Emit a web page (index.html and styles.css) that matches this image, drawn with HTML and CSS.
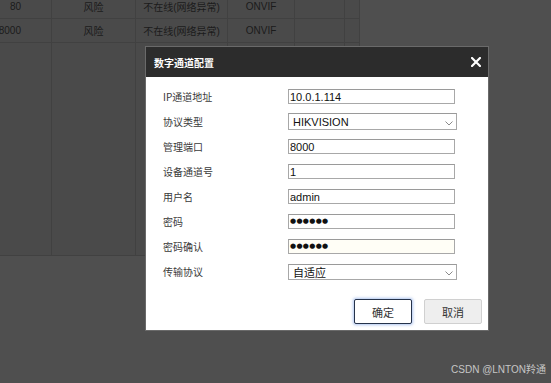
FILE: index.html
```html
<!DOCTYPE html>
<html lang="zh-CN">
<head>
<meta charset="utf-8">
<title>数字通道配置</title>
<link rel="stylesheet" href="styles.css">
</head>
<body>
<div class="page">
  <div class="grid">
    <div class="row">
      <div class="c c1">80</div><div class="c">风险</div><div class="c">不在线(网络异常)</div><div class="c">ONVIF</div><div class="c"></div><div class="c"></div>
    </div>
    <div class="row">
      <div class="c c1">8000</div><div class="c">风险</div><div class="c">不在线(网络异常)</div><div class="c">ONVIF</div><div class="c"></div><div class="c"></div>
    </div>
    <div class="row">
      <div class="c"></div><div class="c"></div><div class="c"></div><div class="c"></div><div class="c"></div><div class="c"></div>
    </div>
  </div>
</div>

<div class="dialog">
  <div class="dlg-head">
    <span class="dlg-title">数字通道配置</span>
    <svg class="dlg-close" width="10" height="10" viewBox="0 0 10 10"><path d="M1 1L9 9M9 1L1 9" stroke="#fff" stroke-width="2.2" stroke-linecap="square"/></svg>
  </div>
  <div class="dlg-body">
    <div class="form">
      <label class="lbl">IP通道地址</label>
      <div class="fld"><input class="inp" type="text" value="10.0.1.114"></div>
      <label class="lbl">协议类型</label>
      <div class="fld"><div class="sel sel-tall"><span>HIKVISION</span><svg class="chev" width="8" height="5" viewBox="0 0 8 5"><path d="M0.5 0.5L4 4L7.5 0.5" fill="none" stroke="#8a8a8a" stroke-width="1"/></svg></div></div>
      <label class="lbl">管理端口</label>
      <div class="fld"><input class="inp" type="text" value="8000"></div>
      <label class="lbl">设备通道号</label>
      <div class="fld"><input class="inp" type="text" value="1"></div>
      <label class="lbl">用户名</label>
      <div class="fld"><input class="inp" type="text" value="admin"></div>
      <label class="lbl">密码</label>
      <div class="fld"><div class="inp pw">●●●●●●</div></div>
      <label class="lbl">密码确认</label>
      <div class="fld"><div class="inp pw pw-auto">●●●●●●</div></div>
      <label class="lbl">传输协议</label>
      <div class="fld"><div class="sel"><span class="cjk">自适应</span><svg class="chev" width="8" height="5" viewBox="0 0 8 5"><path d="M0.5 0.5L4 4L7.5 0.5" fill="none" stroke="#8a8a8a" stroke-width="1"/></svg></div></div>
    </div>
    <div class="footer">
      <button class="btn btn-ok">确定</button>
      <button class="btn btn-cancel">取消</button>
    </div>
  </div>
</div>

<div class="watermark">CSDN @LNTON羚通</div>
</body>
</html>
```

FILE: styles.css
```css
html, body {
  margin: 0;
  padding: 0;
}
body {
  width: 551px;
  height: 383px;
  overflow: hidden;
  background: #4f4f4f;
  font-family: "Liberation Sans", "Noto Sans CJK SC", sans-serif;
  position: relative;
}
.page {
  width: 360px;
  height: 256px;
  overflow: hidden;
  background: #4a4a4a;
}
.grid {
  margin-top: -5px;
  height: 261px;
  display: grid;
  grid-template-rows: 24px 24px 1fr;
}
.row {
  display: grid;
  grid-template-columns: 52px 84px 92px 67px 50px 15px;
}
.c {
  box-sizing: border-box;
  border-right: 1px solid #414141;
  border-bottom: 1px solid #414141;
  display: flex;
  align-items: center;
  justify-content: center;
  font-size: 10px;
  color: #1b1b1b;
  white-space: nowrap;
  overflow: hidden;
}
.c1 {
  justify-content: flex-end;
  padding-right: 30px;
}

.dialog {
  position: absolute;
  left: 145px;
  top: 46px;
  width: 344px;
  height: 285px;
  box-sizing: border-box;
  border: 1px solid #6a6a6a;
  display: flex;
  flex-direction: column;
}
.dlg-head {
  height: 30px;
  background: #2c2c2c;
  display: flex;
  align-items: center;
  justify-content: space-between;
  padding: 0 7px 0 8px;
}
.dlg-title {
  color: #ffffff;
  font-family: "Noto Sans CJK SC", sans-serif;
  font-weight: 700;
  font-size: 10px;
}
.dlg-close {
  display: block;
}
.dlg-body {
  flex: 1;
  background: #ffffff;
  padding: 7px 6px 6px 17px;
  display: flex;
  flex-direction: column;
}
.form {
  display: grid;
  grid-template-columns: 125px 169px;
  grid-auto-rows: 25px;
}
.lbl {
  display: flex;
  align-items: center;
  font-family: "Noto Sans CJK SC", sans-serif;
  font-size: 10px;
  color: #3a3a3a;
}
.fld {
  display: flex;
  align-items: center;
}
.inp {
  box-sizing: border-box;
  width: 167px;
  height: 15px;
  margin: 0;
  padding: 0 0 0 1px;
  border: 1px solid #a8a8a8;
  border-top-color: #9a9a9a;
  font-family: "Liberation Sans", sans-serif;
  font-size: 11px;
  color: #111;
  background: #fff;
  outline: none;
}
.pw {
  display: flex;
  align-items: center;
  font-family: "DejaVu Sans", sans-serif;
  font-size: 7px;
  letter-spacing: 0.3px;
  line-height: 1;
  color: #111;
}
.pw-auto {
  background: #fffef6;
}
.sel {
  position: relative;
  box-sizing: border-box;
  width: 169px;
  height: 16px;
  border: 1px solid #a8a8a8;
  border-top-color: #9a9a9a;
  display: flex;
  align-items: center;
  padding-left: 4px;
  font-size: 11px;
  color: #111;
}
.sel-tall {
  height: 17px;
}
.cjk {
  font-family: "Noto Sans CJK SC", sans-serif;
  font-size: 11px;
}
.chev {
  position: absolute;
  right: 3px;
  top: 50%;
  margin-top: -1px;
}
.footer {
  margin-top: 15px;
  display: flex;
  justify-content: flex-end;
  gap: 12px;
}
.btn {
  box-sizing: border-box;
  width: 58px;
  height: 25px;
  margin: 0;
  padding: 0;
  font-family: "Noto Sans CJK SC", sans-serif;
  font-size: 11px;
  color: #333;
  border-radius: 2px;
}
.btn-ok {
  background: #ffffff;
  border: 1px solid #25324a;
  box-shadow: 0 0 3px 1px rgba(110, 150, 225, 0.55);
}
.btn-cancel {
  background: #eeeeee;
  border: 1px solid #d0d0d0;
}
.watermark {
  position: absolute;
  right: 5px;
  bottom: 7px;
  font-size: 10px;
  color: #c6c6c6;
  font-family: "Liberation Sans", "Noto Sans CJK SC", sans-serif;
}
```
